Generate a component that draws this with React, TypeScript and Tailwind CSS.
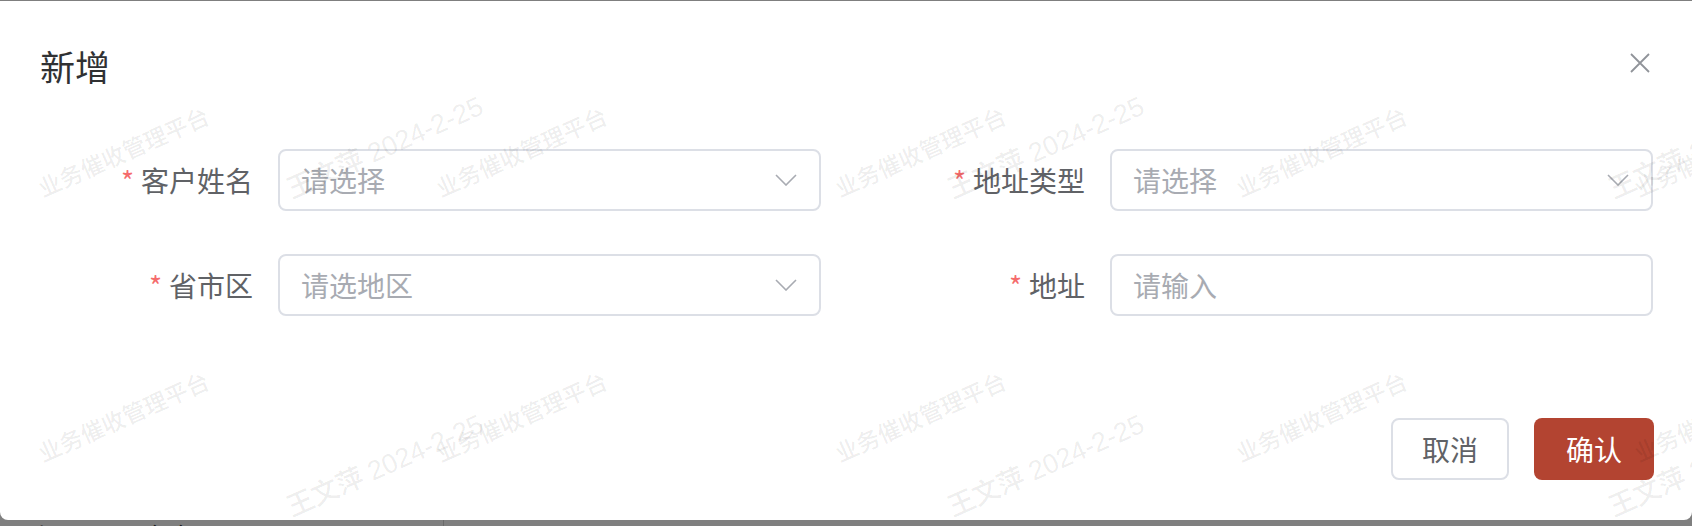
import React from 'react'

const font = "font-['Noto_Sans_CJK_SC','Liberation_Sans',sans-serif]"

// watermark tiles over the dialog
const marks = [
  { text: '业务催收管理平台', cls: 'left-[124px] top-[153px] text-[23px]' },
  { text: '业务催收管理平台', cls: 'left-[522px] top-[153px] text-[23px]' },
  { text: '业务催收管理平台', cls: 'left-[921px] top-[153px] text-[23px]' },
  { text: '业务催收管理平台', cls: 'left-[1322px] top-[153px] text-[23px]' },
  { text: '业务催收管理平台', cls: 'left-[1720px] top-[153px] text-[23px]' },
  { text: '业务催收管理平台', cls: 'left-[124px] top-[418px] text-[23px]' },
  { text: '业务催收管理平台', cls: 'left-[522px] top-[418px] text-[23px]' },
  { text: '业务催收管理平台', cls: 'left-[921px] top-[418px] text-[23px]' },
  { text: '业务催收管理平台', cls: 'left-[1322px] top-[418px] text-[23px]' },
  { text: '业务催收管理平台', cls: 'left-[1720px] top-[418px] text-[23px]' },
  { text: '王文萍 2024-2-25', cls: 'left-[385px] top-[148px] text-[27px]' },
  { text: '王文萍 2024-2-25', cls: 'left-[1046px] top-[148px] text-[27px]' },
  { text: '王文萍 2024-2-25', cls: 'left-[1707px] top-[148px] text-[27px]' },
  { text: '王文萍 2024-2-25', cls: 'left-[385px] top-[466px] text-[27px]' },
  { text: '王文萍 2024-2-25', cls: 'left-[1046px] top-[466px] text-[27px]' },
  { text: '王文萍 2024-2-25', cls: 'left-[1707px] top-[466px] text-[27px]' },
]

const fields = [
  { label: '客户姓名', placeholder: '请选择', select: true },
  { label: '地址类型', placeholder: '请选择', select: true },
  { label: '省市区', placeholder: '请选地区', select: true },
  { label: '地址', placeholder: '请输入', select: false },
]

const Chevron = () => (
  <svg width="22" height="12" viewBox="0 0 22 12" fill="none">
    <polyline points="1,1 11,11 21,1" stroke="#a8abb2" strokeWidth="1.6" />
  </svg>
)

const Field = ({ label, placeholder, select }: { label: string; placeholder: string; select: boolean }) => (
  <div className="flex items-center h-[62px]">
    <label className="w-[238px] pr-[25px] flex justify-end items-center text-[28px] text-[#606266]">
      <span className="text-[#f56c6c] mr-[7px]">*</span>
      {label}
    </label>
    <div className="w-[543px] h-full border-2 border-[#dcdfe6] rounded-[8px] bg-white flex items-center justify-between pl-[21px] pr-[22px]">
      <span className="text-[28px] text-[#a8abb2]">{placeholder}</span>
      {select && <Chevron />}
    </div>
  </div>
)

const App = () => {
  return (
    <div className={`relative w-[1692px] h-[526px] bg-[#7f7f7f] overflow-hidden flex flex-col ${font}`}>
      <div className="h-[1px]" />
      <div className="h-[519px] bg-white rounded-b-[8px] flex flex-col">
        <div className="h-[128px] flex items-center justify-between pl-[40px] pr-[42px]">
          <h2 className="text-[35px] leading-none text-[#303133]">新增</h2>
          <svg width="20" height="20" viewBox="0 0 20 20" className="mb-[4px]">
            <path d="M1 1L19 19M19 1L1 19" stroke="#909399" strokeWidth="1.8" />
          </svg>
        </div>

        <div className="grid grid-cols-[781px_781px] gap-x-[51px] gap-y-[43px] pl-[40px] mt-[20px]">
          {fields.map((f, i) => (
            <Field key={i} {...f} />
          ))}
        </div>

        <div className="flex justify-end gap-[25px] pr-[38px] mt-[102px]">
          <button className="w-[118px] h-[62px] rounded-[8px] border-2 border-[#dcdfe6] bg-white text-[28px] text-[#606266]">
            取消
          </button>
          <button className="w-[120px] h-[62px] rounded-[8px] bg-[#b34431] text-[28px] text-white">
            确认
          </button>
        </div>
      </div>

      {/* table under the mask, cut off */}
      <div className="h-[6px] overflow-hidden flex text-[26px] leading-none text-[#1c1c1c]">
        <span className="ml-[28px] w-[415px] mt-[3px]">张子平 马哈哈</span>
        <span className="w-[1px] h-full bg-[#6a6a6a]" />
        <span className="ml-[518px] mt-[3px]">15770200002</span>
      </div>

      <div className="absolute inset-0 pointer-events-none">
        {marks.map((m, i) => (
          <span
            key={i}
            className={`absolute whitespace-nowrap -translate-x-1/2 -translate-y-1/2 -rotate-[24deg] font-medium text-black/[0.08] font-['Liberation_Sans','Noto_Sans_CJK_SC',sans-serif] ${m.cls}`}
          >
            {m.text}
          </span>
        ))}
      </div>
    </div>
  )
}

export default App
